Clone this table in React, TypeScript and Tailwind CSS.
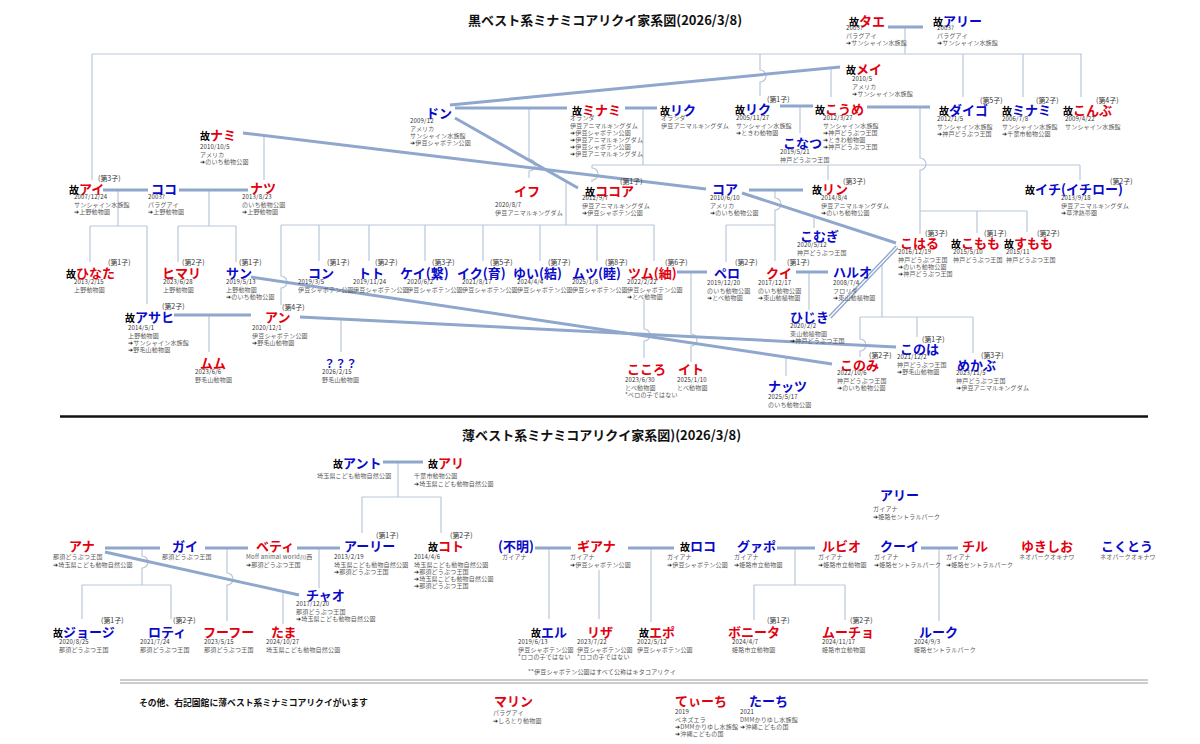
import React from "react";

type Nd = {
  n: string;
  x: number;
  y: number;
  c: "r" | "b";
  late?: boolean;
  t?: [string, number, number];
  d?: string[];
  dx?: number;
  dy?: number;
  sm?: boolean;
};

const IZU_S = "伊豆シャボテン公園";
const IZU_A = "伊豆アニマルキングダム";
const KOBE = "神戸どうぶつ王国";
const NASU = "那須どうぶつ王国";
const SAITAMA = "埼玉県こども動物自然公園";

const nodes: Nd[] = [
  // 黒ベスト系
  { n: "タエ", x: 849, y: 20, c: "r", late: true, d: ["2003?", "パラグアイ", "➔サンシャイン水族館"], dx: 846, dy: 28 },
  { n: "アリー", x: 933, y: 20, c: "b", late: true, d: ["2003?", "パラグアイ", "➔サンシャイン水族館"], dx: 937, dy: 28 },
  { n: "メイ", x: 846, y: 68, c: "r", late: true, d: ["2010/5", "アメリカ", "➔サンシャイン水族館"], dx: 852, dy: 79 },
  { n: "ドン", x: 426, y: 112, c: "b", d: ["2009/12", "アメリカ", "サンシャイン水族館", "➔" + IZU_S], dx: 410, dy: 121 },
  { n: "ミナミ", x: 572, y: 109, c: "r", late: true, d: ["オランダ", IZU_A, "➔" + IZU_S, "➔" + IZU_A, "➔" + IZU_S, "➔" + IZU_A], dx: 570, dy: 118 },
  { n: "リク", x: 660, y: 109, c: "b", late: true, d: ["オランダ", IZU_A], dx: 661, dy: 118 },
  { n: "リク", x: 735, y: 108, c: "b", late: true, t: ["第1子", 767, 99], d: ["2005/11/27", "サンシャイン水族館", "➔ときわ動物園"], dx: 736, dy: 118 },
  { n: "こうめ", x: 815, y: 108, c: "r", late: true, d: ["2012/3/27", "サンシャイン水族館", "➔" + KOBE, "➔ときわ動物園", "➔" + KOBE], dx: 823, dy: 118 },
  { n: "こなつ", x: 783, y: 142, c: "b", d: ["2019/5/21", KOBE], dx: 780, dy: 152 },
  { n: "ダイゴ", x: 939, y: 109, c: "b", late: true, t: ["第5子", 980, 100], d: ["2012/1/5", "サンシャイン水族館", "➔" + KOBE], dx: 937, dy: 119 },
  { n: "ミナミ", x: 1002, y: 109, c: "b", late: true, t: ["第2子", 1036, 100], d: ["2006/7/8", "サンシャイン水族館", "➔千葉市動物公園"], dx: 1002, dy: 119 },
  { n: "こんぶ", x: 1063, y: 109, c: "r", late: true, t: ["第4子", 1096, 100], d: ["2009/4/22", "サンシャイン水族館"], dx: 1065, dy: 119 },
  { n: "ナミ", x: 200, y: 134, c: "r", late: true, d: ["2010/10/5", "アメリカ", "➔のいち動物公園"], dx: 200, dy: 147 },
  { n: "アイ", x: 69, y: 188, c: "r", late: true, t: ["第3子", 98, 178], d: ["2007/12/24", "サンシャイン水族館", "➔上野動物園"], dx: 74, dy: 197 },
  { n: "ココ", x: 151, y: 188, c: "b", d: ["2003?", "パラグアイ", "➔上野動物園"], dx: 148, dy: 197 },
  { n: "ナツ", x: 250, y: 187, c: "r", d: ["2013/8/23", "のいち動物公園", "➔上野動物園"], dx: 242, dy: 197 },
  { n: "イフ", x: 514, y: 190, c: "r", d: ["2020/8/7", IZU_A], dx: 495, dy: 205 },
  { n: "ココア", x: 585, y: 190, c: "r", late: true, t: ["第1子", 620, 181], d: ["2012/9/7", IZU_A, "➔" + IZU_S], dx: 582, dy: 198 },
  { n: "コア", x: 712, y: 188, c: "b", d: ["2010/6/10", "アメリカ", "➔のいち動物公園"], dx: 710, dy: 198 },
  { n: "リン", x: 812, y: 188, c: "r", late: true, t: ["第3子", 843, 181], d: ["2014/8/4", IZU_A, "➔のいち動物公園"], dx: 821, dy: 198 },
  { n: "イチ(イチロー)", x: 1025, y: 188, c: "b", late: true, t: ["第2子", 1110, 181], d: ["2013/9/18", IZU_A, "➔草津熱帯圏"], dx: 1061, dy: 198 },
  { n: "こむぎ", x: 800, y: 235, c: "b", d: ["2020/5/12", KOBE], dx: 797, dy: 245 },
  { n: "こはる", x: 900, y: 242, c: "r", t: ["第3子", 925, 233], d: ["2016/12/19", KOBE, "➔のいち動物公園", "➔" + KOBE], dx: 898, dy: 252 },
  { n: "こもも", x: 951, y: 242, c: "r", late: true, t: ["第1子", 984, 233], d: ["2015/5/10", KOBE], dx: 953, dy: 252 },
  { n: "すもも", x: 1004, y: 242, c: "r", late: true, t: ["第2子", 1037, 233], d: ["2015/11", KOBE], dx: 1006, dy: 252 },
  { n: "ひなた", x: 66, y: 272, c: "r", late: true, t: ["第1子", 108, 262], d: ["2013/2/15", "上野動物園"], dx: 74, dy: 282 },
  { n: "ヒマリ", x: 162, y: 272, c: "r", t: ["第2子", 182, 262], d: ["2023/6/28", "上野動物園"], dx: 163, dy: 282 },
  { n: "サン", x: 226, y: 272, c: "b", t: ["第1子", 239, 262], d: ["2019/5/13", "上野動物園", "➔のいち動物公園"], dx: 226, dy: 282 },
  { n: "コン", x: 308, y: 272, c: "b", t: ["第1子", 327, 262], d: ["2019/3/5", IZU_S], dx: 298, dy: 282 },
  { n: "トト", x: 358, y: 272, c: "b", t: ["第2子", 375, 262], d: ["2019/11/24", IZU_S], dx: 353, dy: 282 },
  { n: "ケイ(繋)", x: 400, y: 272, c: "b", t: ["第3子", 432, 262], d: ["2020/6/2", IZU_S], dx: 407, dy: 282 },
  { n: "イク(育)", x: 457, y: 272, c: "b", t: ["第5子", 490, 262], d: ["2021/8/17", IZU_S], dx: 462, dy: 282 },
  { n: "ゆい(結)", x: 513, y: 272, c: "b", t: ["第7子", 548, 262], d: ["2024/4/4", IZU_S], dx: 517, dy: 282 },
  { n: "ムツ(睦)", x: 572, y: 272, c: "b", t: ["第8子", 605, 262], d: ["2025/1/8", IZU_S], dx: 572, dy: 282 },
  { n: "ツム(紬)", x: 628, y: 272, c: "r", t: ["第6子", 665, 262], d: ["2022/2/22", IZU_S, "➔とべ動物園"], dx: 627, dy: 282 },
  { n: "ペロ", x: 714, y: 272, c: "b", t: ["第2子", 735, 262], d: ["2019/12/20", "のいち動物公園", "➔とべ動物園"], dx: 707, dy: 283 },
  { n: "クイ", x: 766, y: 272, c: "r", t: ["第1子", 787, 262], d: ["2017/12/17", "のいち動物公園", "➔東山動植物園"], dx: 758, dy: 283 },
  { n: "ハルオ", x: 833, y: 271, c: "b", d: ["2008/7/4", "フロリダ", "➔東山動植物園"], dx: 833, dy: 283 },
  { n: "ひじき", x: 790, y: 316, c: "b", d: ["2020/2/2", "東山動植物園", "➔" + KOBE], dx: 790, dy: 326 },
  { n: "アサヒ", x: 125, y: 316, c: "b", late: true, t: ["第2子", 162, 306], d: ["2014/5/1", "上野動物園", "➔サンシャイン水族館", "➔野毛山動物園"], dx: 128, dy: 328 },
  { n: "アン", x: 265, y: 316, c: "r", t: ["第4子", 282, 307], d: ["2020/12/1", IZU_S, "➔野毛山動物園"], dx: 252, dy: 328 },
  { n: "ムム", x: 200, y: 362, c: "r", d: ["2023/6/6", "野毛山動物園"], dx: 195, dy: 372 },
  { n: "？？？", x: 324, y: 362, c: "b", sm: true, d: ["2026/2/15", "野毛山動物園"], dx: 322, dy: 372 },
  { n: "こころ", x: 627, y: 368, c: "r", d: ["2023/6/30", "とべ動物園", "*ペロの子ではない"], dx: 625, dy: 380 },
  { n: "イト", x: 678, y: 368, c: "r", d: ["2025/1/10", "とべ動物園"], dx: 677, dy: 380 },
  { n: "ナッツ", x: 768, y: 385, c: "b", d: ["2025/5/17", "のいち動物公園"], dx: 768, dy: 397 },
  { n: "このは", x: 900, y: 348, c: "b", t: ["第1子", 922, 339], d: ["2021/12/2", KOBE, "➔野毛山動物園"], dx: 897, dy: 357 },
  { n: "このみ", x: 840, y: 364, c: "r", t: ["第2子", 869, 355], d: ["2022/10/6", KOBE, "➔のいち動物公園"], dx: 837, dy: 373 },
  { n: "めかぶ", x: 957, y: 364, c: "b", t: ["第3子", 981, 355], d: ["2023/11/5", KOBE, "➔" + IZU_A], dx: 956, dy: 373 },
  // 薄ベスト系
  { n: "アント", x: 333, y: 462, c: "b", late: true, d: [SAITAMA], dx: 317, dy: 476 },
  { n: "アリ", x: 428, y: 462, c: "r", late: true, d: ["千葉市動物公園", "➔" + SAITAMA], dx: 414, dy: 476 },
  { n: "アナ", x: 69, y: 545, c: "r", d: [NASU, "➔" + SAITAMA], dx: 53, dy: 557 },
  { n: "ガイ", x: 172, y: 545, c: "b", d: [NASU], dx: 162, dy: 557 },
  { n: "ベティ", x: 256, y: 545, c: "r", d: ["Moff animal world川西", "➔" + NASU], dx: 246, dy: 557 },
  { n: "アーリー", x: 344, y: 545, c: "b", t: ["第1子", 376, 535], d: ["2013/2/19", SAITAMA, "➔" + NASU], dx: 334, dy: 557 },
  { n: "コト", x: 428, y: 545, c: "r", late: true, t: ["第2子", 450, 535], d: ["2014/4/6", SAITAMA, "➔" + NASU, "➔" + SAITAMA, "➔" + NASU], dx: 414, dy: 557 },
  { n: "(不明)", x: 498, y: 545, c: "b", d: ["ガイアナ"], dx: 502, dy: 557 },
  { n: "ギアナ", x: 577, y: 545, c: "r", d: ["ガイアナ", "➔" + IZU_S], dx: 570, dy: 557 },
  { n: "ロコ", x: 680, y: 545, c: "b", late: true, d: ["ガイアナ", "➔" + IZU_S], dx: 667, dy: 557 },
  { n: "グァポ", x: 737, y: 545, c: "b", d: ["ガイアナ", "➔姫路市立動物園"], dx: 734, dy: 557 },
  { n: "ルビオ", x: 822, y: 545, c: "r", d: ["ガイアナ", "➔姫路市立動物園"], dx: 818, dy: 557 },
  { n: "アリー", x: 880, y: 494, c: "b", d: ["ガイアナ", "➔姫路セントラルパーク"], dx: 873, dy: 509 },
  { n: "クーイ", x: 880, y: 545, c: "b", d: ["ガイアナ", "➔姫路セントラルパーク"], dx: 874, dy: 557 },
  { n: "チル", x: 962, y: 545, c: "r", d: ["ガイアナ", "➔姫路セントラルパーク"], dx: 946, dy: 557 },
  { n: "ゆきしお", x: 1021, y: 545, c: "r", d: ["ネオパークオキナワ"], dx: 1019, dy: 557 },
  { n: "こくとう", x: 1101, y: 545, c: "b", d: ["ネオパークオキナワ"], dx: 1100, dy: 557 },
  { n: "チャオ", x: 306, y: 594, c: "b", d: ["2017/12/20", NASU, "➔" + SAITAMA], dx: 296, dy: 604 },
  { n: "ジョージ", x: 53, y: 631, c: "b", late: true, t: ["第1子", 101, 620], d: ["2020/8/25", NASU], dx: 59, dy: 642 },
  { n: "ロティ", x: 148, y: 631, c: "b", t: ["第2子", 173, 620], d: ["2021/7/24", NASU], dx: 140, dy: 642 },
  { n: "フーフー", x: 203, y: 631, c: "r", d: ["2023/5/15", NASU], dx: 204, dy: 642 },
  { n: "たま", x: 271, y: 631, c: "r", d: ["2024/10/27", SAITAMA], dx: 266, dy: 642 },
  { n: "エル", x: 531, y: 631, c: "b", late: true, d: ["2019/6/13", IZU_S, "*ロコの子ではない"], dx: 518, dy: 642 },
  { n: "リザ", x: 587, y: 631, c: "r", d: ["2023/7/22", IZU_S, "*ロコの子ではない"], dx: 577, dy: 642 },
  { n: "エポ", x: 639, y: 631, c: "r", late: true, d: ["2022/5/12", IZU_S], dx: 637, dy: 642 },
  { n: "ボニータ", x: 728, y: 631, c: "r", t: ["第1子", 767, 620], d: ["2024/4/7", "姫路市立動物園"], dx: 732, dy: 642 },
  { n: "ムーチョ", x: 822, y: 631, c: "r", t: ["第2子", 850, 620], d: ["2024/11/17", "姫路市立動物園"], dx: 822, dy: 642 },
  { n: "ルーク", x: 919, y: 631, c: "b", d: ["2024/9/3", "姫路セントラルパーク"], dx: 914, dy: 642 },
  // その他
  { n: "マリン", x: 494, y: 700, c: "r", d: ["パラグアイ", "➔しろとり動物園"], dx: 493, dy: 713 },
  { n: "てぃーち", x: 675, y: 700, c: "r", d: ["2019", "ベネズエラ", "➔DMMかりゆし水族館", "➔沖縄こどもの国"], dx: 675, dy: 712 },
  { n: "たーち", x: 749, y: 700, c: "b", d: ["2021", "DMMかりゆし水族館", "➔沖縄こどもの国"], dx: 740, dy: 712 },
];

// couple lines (thick)
const thick: [number, number, number, number][] = [
  [888, 27, 923, 27],
  [450, 105, 840, 67],
  [455, 108, 567, 108],
  [625, 108, 657, 108],
  [780, 106, 813, 106],
  [867, 107, 930, 107],
  [243, 133, 706, 189],
  [455, 118, 578, 188],
  [103, 190, 148, 190],
  [179, 190, 248, 190],
  [749, 190, 803, 190],
  [742, 193, 896, 243],
  [677, 272, 707, 272],
  [796, 272, 828, 272],
  [174, 315, 251, 315],
  [251, 277, 832, 364],
  [300, 317, 896, 347],
  [383, 462, 423, 462],
  [105, 548, 160, 548],
  [205, 548, 248, 548],
  [297, 548, 340, 548],
  [105, 552, 299, 595],
  [535, 548, 571, 548],
  [628, 548, 674, 548],
  [777, 548, 815, 548],
  [921, 548, 958, 548],
];

// vertical thin lines: x, y1, y2, hops
const vlines: [number, number, number, number[]?][] = [
  [92, 54, 180], [905, 27, 54], [760, 54, 96, [76]], [963, 54, 97], [1023, 54, 97], [1081, 54, 97],
  [831, 68, 97], [800, 106, 133], [529, 108, 178, [165]], [643, 108, 165], [592, 165, 182, [174]],
  [828, 165, 180], [1080, 165, 180], [920, 107, 234, [164]], [977, 211, 233], [1027, 211, 232],
  [264, 136, 180], [118, 190, 226], [90, 226, 262], [147, 226, 304], [209, 190, 226], [178, 226, 262],
  [236, 226, 262], [209, 315, 352], [341, 320, 352], [566, 182, 225], [281, 225, 305, [282]],
  [319, 225, 261], [369, 225, 261], [425, 225, 261], [483, 225, 261], [540, 225, 261], [597, 225, 261],
  [654, 225, 261], [775, 190, 261, [204]], [726, 225, 262], [814, 216, 228], [809, 272, 310],
  [882, 263, 317], [860, 317, 357, [345]], [917, 317, 337], [973, 317, 353], [644, 300, 358, [335]],
  [691, 272, 362, [340]], [786, 357, 376],
  [398, 462, 497], [362, 497, 533], [441, 497, 533], [142, 548, 585, [562]], [82, 585, 619],
  [171, 585, 619], [227, 548, 621, [579]], [319, 548, 588], [283, 591, 624], [549, 548, 619],
  [599, 570, 619], [651, 548, 622], [795, 548, 585], [754, 585, 620], [845, 585, 620], [939, 548, 621],
];

const hlines: [number, number, number][] = [
  [92, 1082, 54], [592, 1080, 165], [920, 1027, 211], [90, 147, 226], [178, 236, 226],
  [281, 654, 225], [726, 775, 225], [860, 973, 317], [362, 441, 497], [82, 171, 585], [754, 845, 585],
];

function vpath(x: number, y1: number, y2: number, hops: number[] = []) {
  const r = 6;
  let d = `M${x} ${y1}`;
  for (const h of hops) {
    d += ` V${h - r} A${r} ${r} 0 0 1 ${x} ${h + r}`;
  }
  return d + ` V${y2}`;
}

function Detail({ line }: { line: string }) {
  if (line.startsWith("➔")) {
    return (
      <div>
        <span className="text-[#111]">➔</span>
        {line.slice(1)}
      </div>
    );
  }
  const dark = /^\d/.test(line);
  return <div className={dark ? "text-[#333]" : ""}>{line}</div>;
}

function Node({ nd }: { nd: Nd }) {
  return (
    <>
      <div
        className="absolute whitespace-nowrap leading-[20px]"
        style={{ left: nd.x, top: nd.y - 11 }}
      >
        {nd.late && <span className="text-[10px] font-bold text-black">故</span>}
        <span
          className={`${nd.sm ? "text-[11px]" : "text-[13px]"} font-bold ${
            nd.c === "r" ? "text-[#e2000e]" : "text-[#0a0ac8]"
          }`}
        >
          {nd.n}
        </span>
      </div>
      {nd.t && (
        <div
          className="absolute whitespace-nowrap text-[7px] leading-[10px] text-[#333]"
          style={{ left: nd.t[1], top: nd.t[2] - 5 }}
        >
          ({nd.t[0]})
        </div>
      )}
      {nd.d && (
        <div
          className="absolute whitespace-nowrap text-[6px] leading-[7.2px] tracking-[0.2px] text-[#5a5a5a]"
          style={{ left: nd.dx, top: (nd.dy ?? 0) - 3.6 }}
        >
          {nd.d.map((l, i) => (
            <Detail key={i} line={l} />
          ))}
        </div>
      )}
    </>
  );
}

export default function App() {
  return (
    <div className="relative h-[744px] w-[1200px] overflow-hidden bg-white font-['Noto_Sans_CJK_JP','Noto_Sans',sans-serif]">
      <svg className="absolute inset-0" width={1200} height={744} viewBox="0 0 1200 744" fill="none">
        <g stroke="#b9c7da" strokeWidth={1.2}>
          {vlines.map(([x, y1, y2, h], i) => (
            <path key={i} d={vpath(x, y1, y2, h)} />
          ))}
          {hlines.map(([x1, x2, y], i) => (
            <line key={i} x1={x1} y1={y} x2={x2} y2={y} />
          ))}
        </g>
        <g stroke="#8fa7cc" strokeWidth={3}>
          {thick.map(([x1, y1, x2, y2], i) => (
            <line key={i} x1={x1} y1={y1} x2={x2} y2={y2} />
          ))}
          <line x1={830} y1={317} x2={897} y2={247} strokeWidth={4} />
        </g>
        <line x1={830} y1={317} x2={897} y2={247} stroke="#ffffff" strokeWidth={1.3} />
        {/* divider */}
        <line x1={60} y1={416.5} x2={1148} y2={416.5} stroke="#111" strokeWidth={2.5} />
        <line x1={120} y1={680} x2={1148} y2={680} stroke="#9a9a9a" strokeWidth={1} />
        <line x1={120} y1={683} x2={1148} y2={683} stroke="#9a9a9a" strokeWidth={1} />
      </svg>

      <div className="absolute left-[468px] top-[10px] whitespace-nowrap text-[13px] font-bold leading-[20px] text-[#111]">
        黒ベスト系ミナミコアリクイ家系図(2026/3/8)
      </div>
      <div className="absolute left-[462px] top-[425px] whitespace-nowrap text-[13px] font-bold leading-[20px] text-[#111]">
        薄ベスト系ミナミコアリクイ家系図)(2026/3/8)
      </div>

      {nodes.map((nd, i) => (
        <Node key={i} nd={nd} />
      ))}

      <div className="absolute left-[528px] top-[668px] whitespace-nowrap text-[6px] leading-[8px] tracking-[0.2px] text-[#555]">
        **伊豆シャボテン公園はすべて公称はキタコアリクイ
      </div>
      <div className="absolute left-[139px] top-[697px] whitespace-nowrap text-[8.8px] font-bold leading-[12px] text-[#111]">
        その他、右記園館に薄ベスト系ミナミコアリクイがいます
      </div>
    </div>
  );
}
